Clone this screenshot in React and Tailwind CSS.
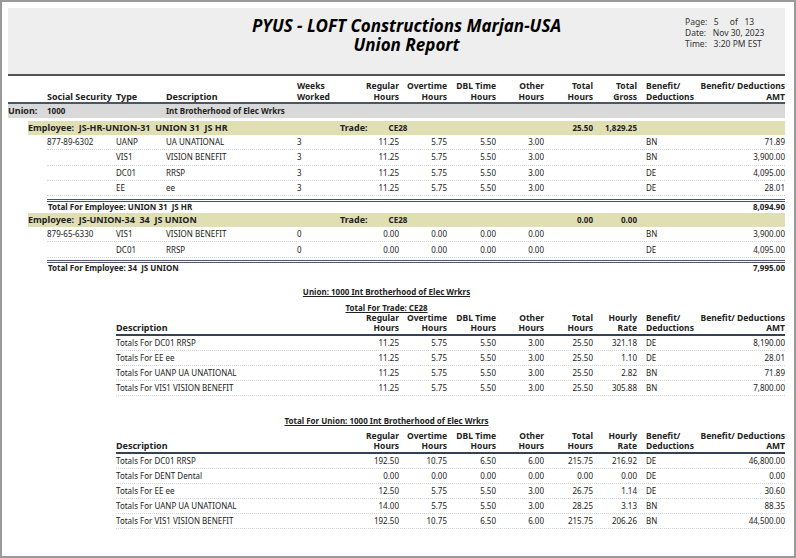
const COLS = "grid grid-cols-[39px_69px_50px_131px_53px_49px_48px_49px_48px_49px_44px_9px_54px_85px]";

const empRows1 = [
  ["877-89-6302", "UANP", "UA UNATIONAL", "3", "11.25", "5.75", "5.50", "3.00", "BN", "71.89"],
  ["", "VIS1", "VISION BENEFIT", "3", "11.25", "5.75", "5.50", "3.00", "BN", "3,900.00"],
  ["", "DC01", "RRSP", "3", "11.25", "5.75", "5.50", "3.00", "DE", "4,095.00"],
  ["", "EE", "ee", "3", "11.25", "5.75", "5.50", "3.00", "DE", "28.01"],
];
const empRows2 = [
  ["879-65-6330", "VIS1", "VISION BENEFIT", "0", "0.00", "0.00", "0.00", "0.00", "BN", "3,900.00"],
  ["", "DC01", "RRSP", "0", "0.00", "0.00", "0.00", "0.00", "DE", "4,095.00"],
];
const tradeRows = [
  ["Totals For DC01 RRSP", "11.25", "5.75", "5.50", "3.00", "25.50", "321.18", "DE", "8,190.00"],
  ["Totals For EE ee", "11.25", "5.75", "5.50", "3.00", "25.50", "1.10", "DE", "28.01"],
  ["Totals For UANP UA UNATIONAL", "11.25", "5.75", "5.50", "3.00", "25.50", "2.82", "BN", "71.89"],
  ["Totals For VIS1 VISION BENEFIT", "11.25", "5.75", "5.50", "3.00", "25.50", "305.88", "BN", "7,800.00"],
];
const unionRows = [
  ["Totals For DC01 RRSP", "192.50", "10.75", "6.50", "6.00", "215.75", "216.92", "DE", "46,800.00"],
  ["Totals For DENT Dental", "0.00", "0.00", "0.00", "0.00", "0.00", "0.00", "DE", "0.00"],
  ["Totals For EE ee", "12.50", "5.75", "5.50", "3.00", "26.75", "1.14", "DE", "30.60"],
  ["Totals For UANP UA UNATIONAL", "14.00", "5.75", "5.50", "3.00", "28.25", "3.13", "BN", "88.35"],
  ["Totals For VIS1 VISION BENEFIT", "192.50", "10.75", "6.50", "6.00", "215.75", "206.26", "BN", "44,500.00"],
];

function DetailRow({ r }) {
  return (
    <div className={`${COLS} h-[15.3px] items-center`}>
      <div />
      <div className="col-span-13 grid grid-cols-subgrid border-b border-dotted border-gray-300 h-full items-center">
        <div>{r[0]}</div>
        <div>{r[1]}</div>
        <div>{r[2]}</div>
        <div>{r[3]}</div>
        <div className="text-right">{r[4]}</div>
        <div className="text-right">{r[5]}</div>
        <div className="text-right">{r[6]}</div>
        <div className="text-right">{r[7]}</div>
        <div />
        <div />
        <div />
        <div>{r[8]}</div>
        <div className="text-right">{r[9]}</div>
      </div>
    </div>
  );
}

function EmpBand({ label, hours, gross }) {
  return (
    <div className={`${COLS} h-[13px] items-center font-bold`}>
      <div className="col-span-14 ml-[20px] bg-[#e0dfb3] h-full grid grid-cols-subgrid items-center">
        <div className="col-span-4 text-[9px] whitespace-pre">{label}</div>
        <div className="text-[9px] pl-[43px] col-span-2 whitespace-nowrap">Trade:<span className="pl-[21px] text-[8px]">CE28</span></div>
        <div />
        <div />
        <div />
        <div className="text-right">{hours}</div>
        <div className="text-right">{gross}</div>
        <div />
        <div />
        <div />
      </div>
    </div>
  );
}

function TotalRow({ label, amt }) {
  return (
    <div className={`${COLS} font-bold`}>
      <div />
      <div className="col-span-13 border-t-[3px] border-double border-gray-600 h-[13px] flex items-center justify-between pl-[1px] whitespace-pre">
        <span>{label}</span>
        <span>{amt}</span>
      </div>
    </div>
  );
}

function SummaryTable({ title, sub, rows }) {
  return (
    <div>
      <div className="text-center font-bold underline pr-[20px] h-[16px]">{title}</div>
      {sub && <div className="text-center font-bold underline pr-[20px] h-[10px] mb-[1px]">{sub}</div>}
      <div className={`${COLS} font-bold text-[8.5px] leading-[10px] items-end`}>
        <div />
        <div />
        <div className="col-span-12 grid grid-cols-subgrid items-end border-b-2 border-gray-700 pb-[1px]">
          <div className="col-span-3 text-[9px]">Description</div>
          <div className="text-right">Regular<br />Hours</div>
          <div className="text-right">Overtime<br />Hours</div>
          <div className="text-right">DBL Time<br />Hours</div>
          <div className="text-right">Other<br />Hours</div>
          <div className="text-right">Total<br />Hours</div>
          <div className="text-right">Hourly<br />Rate</div>
          <div />
          <div>Benefit/<br />Deductions</div>
          <div className="text-right whitespace-nowrap">Benefit/ Deductions<br />AMT</div>
        </div>
      </div>
      {rows.map((r, i) => (
        <div key={i} className={`${COLS} h-[15px] items-center`}>
          <div />
          <div />
          <div className="col-span-12 grid grid-cols-subgrid items-center h-full border-b border-dotted border-gray-300">
            <div className="col-span-3">{r[0]}</div>
            <div className="text-right">{r[1]}</div>
            <div className="text-right">{r[2]}</div>
            <div className="text-right">{r[3]}</div>
            <div className="text-right">{r[4]}</div>
            <div className="text-right">{r[5]}</div>
            <div className="text-right">{r[6]}</div>
            <div />
            <div>{r[7]}</div>
            <div className="text-right">{r[8]}</div>
          </div>
        </div>
      ))}
    </div>
  );
}

export default function App() {
  return (
    <div className="w-[796px] h-[558px] bg-white border-2 border-[#9a9a9a] overflow-hidden text-[8px] text-[#222] [font-family:'Liberation_Sans',Arial,sans-serif]">
      <div className="pl-[6px] pr-[9px] pt-[6px]">
        {/* Header */}
        <div className="bg-[#eeeeee] h-[68px] flex border-b-2 border-[#555]">
          <div className="flex-1 pt-[8px] text-center italic font-bold text-[17px] leading-[19px] text-black pl-[120px]">
            <div>PYUS - LOFT Constructions Marjan-USA</div>
            <div>Union Report</div>
          </div>
          <div className="w-[100px] pt-[8px] text-[8.5px] leading-[11px] text-[#333] whitespace-pre">
            <div>Page:   5     of   13</div>
            <div>Date:   Nov 30, 2023</div>
            <div>Time:   3:20 PM EST</div>
          </div>
        </div>

        {/* Column headers */}
        <div className={`${COLS} mt-[4px] font-bold text-[8.5px] leading-[11px] items-end border-b-2 border-gray-600`}>
          <div />
          <div className="text-[9px]">Social Security</div>
          <div className="text-[9px]">Type</div>
          <div className="text-[9px]">Description</div>
          <div>Weeks<br />Worked</div>
          <div className="text-right">Regular<br />Hours</div>
          <div className="text-right">Overtime<br />Hours</div>
          <div className="text-right">DBL Time<br />Hours</div>
          <div className="text-right">Other<br />Hours</div>
          <div className="text-right">Total<br />Hours</div>
          <div className="text-right">Total<br />Gross</div>
          <div />
          <div>Benefit/<br />Deductions</div>
          <div className="text-right whitespace-nowrap">Benefit/ Deductions<br />AMT</div>
        </div>

        {/* Union band */}
        <div className={`${COLS} bg-[#d9d9d9] h-[14px] items-center font-bold`}>
          <div className="text-[9px]">Union:</div>
          <div className="col-span-2">1000</div>
          <div className="col-span-11">Int Brotherhood of Elec Wrkrs</div>
        </div>

        <div className="mt-[3px]">
          <EmpBand label="Employee:  JS-HR-UNION-31  UNION 31  JS HR" hours="25.50" gross="1,829.25" />
        </div>
        <div className="mt-[1px]">
          {empRows1.map((r, i) => <DetailRow key={i} r={r} />)}
        </div>
        <div className="mt-[3px]">
          <TotalRow label="Total For Employee: UNION 31  JS HR" amt="8,094.90" />
        </div>
        <div className="mt-[1px]">
          <EmpBand label="Employee:  JS-UNION-34  34  JS UNION" hours="0.00" gross="0.00" />
        </div>
        <div className="mt-[1px]">
          {empRows2.map((r, i) => <DetailRow key={i} r={r} />)}
        </div>
        <div className="mt-[2px]">
          <TotalRow label="Total For Employee: 34  JS UNION" amt="7,995.00" />
        </div>

        <div className="mt-[13px]">
          <SummaryTable title="Union: 1000 Int Brotherhood of Elec Wrkrs" sub="Total For Trade: CE28" rows={tradeRows} />
        </div>
        <div className="mt-[19px]">
          <SummaryTable title="Total For Union: 1000 Int Brotherhood of Elec Wrkrs" rows={unionRows} />
        </div>
      </div>
    </div>
  );
}
